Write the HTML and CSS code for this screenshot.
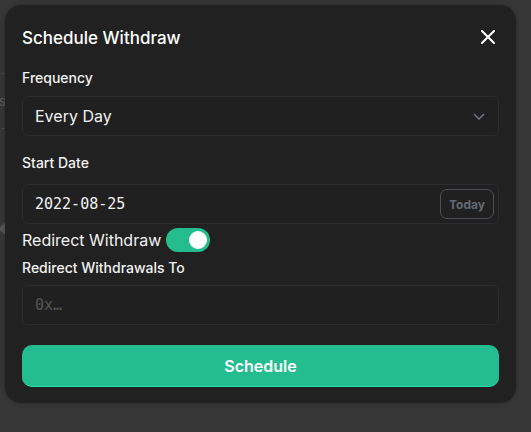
FILE: index.html
```html
<!DOCTYPE html>
<html>
<head>
<meta charset="utf-8">
<link rel="stylesheet" href="styles.css">
</head>
<body>
<div class="page">
  <div class="ghost-line"></div>
  <div class="ghost-text">Users</div>
  <div class="ghost-line"></div>
  <div class="ghost-icon">◆</div>
  <div class="ghost-text2">Fee</div>
</div>
<div class="modal">
  <div class="header">
    <h2 class="title">Schedule Withdraw</h2>
    <svg class="close" width="14" height="14" viewBox="0 0 14 14"><path d="M1 1 L13 13 M13 1 L1 13" stroke="#fff" stroke-width="2" stroke-linecap="square"/></svg>
  </div>
  <div class="label label-freq">Frequency</div>
  <div class="field select">
    <span class="value">Every Day</span>
    <svg class="chev" width="12" height="7" viewBox="0 0 12 7"><path d="M1 1 L6 6 L11 1" fill="none" stroke="#6f7480" stroke-width="1.5"/></svg>
  </div>
  <div class="label label-date">Start Date</div>
  <div class="field date">
    <span class="mono value-mono">2022-08-25</span>
    <button class="today">Today</button>
  </div>
  <div class="redirect-row">
    <span class="redirect-text">Redirect Withdraw</span>
    <span class="toggle"><span class="knob"></span></span>
  </div>
  <div class="label label-to">Redirect Withdrawals To</div>
  <div class="field addr">
    <span class="mono placeholder">0x…</span>
  </div>
  <button class="schedule">Schedule</button>
</div>
</body>
</html>
```
FILE: styles.css
```css
* { box-sizing: border-box; }
html, body { margin: 0; padding: 0; }
body {
  width: 531px;
  height: 432px;
  background: #363636;
  font-family: Inter, "Noto Sans", sans-serif;
  color: #fff;
  overflow: hidden;
  position: relative;
}
.page {
  padding-top: 73px;
  margin-left: -30px;
  color: #5a5a5a;
  font-size: 13px;
}
.ghost-line {
  width: 40px;
  border-top: 1px dashed #4a4a4a;
}
.ghost-text {
  height: 54px;
  line-height: 54px;
}
.ghost-icon {
  margin-top: 92px;
  margin-left: 28px;
  font-size: 12px;
  color: #555;
}
.ghost-text2 {
  margin-top: 34px;
  margin-left: 0;
}
.modal {
  position: absolute;
  left: 5px;
  top: 5px;
  width: 511px;
  background: #212121;
  border-radius: 16px;
  padding: 18px 17px 16px;
  box-shadow: 0 0 4px rgba(0,0,0,0.25);
}
.header {
  display: flex;
  align-items: center;
  justify-content: space-between;
  height: 28px;
}
.title {
  margin: 0;
  font-size: 17px;
  line-height: 28px;
  font-weight: 500;
  letter-spacing: 0;
  padding-top: 1px;
}
.close { margin-right: 4px; }
.label {
  font-size: 14px;
  line-height: 20px;
  font-weight: 500;
  color: #f2f2f2;
}
.label-freq { margin-top: 17px; }
.label-date { margin-top: 17px; }
.label-to { margin-top: 6px; }
.field {
  height: 40px;
  border: 1px solid #2c2c2c;
  border-radius: 6px;
  background: #202020;
  display: flex;
  align-items: center;
  padding: 0 12px 0 12px;
}
.select { margin-top: 8px; justify-content: space-between; padding-right: 13px; }
.value { font-size: 16px; color: #f2f2f2; }
.date { margin-top: 11px; justify-content: space-between; padding-right: 4px; }
.addr { margin-top: 7px; }
.mono {
  font-family: "DejaVu Sans Mono", "Liberation Mono", monospace;
  font-size: 15px;
}
.value-mono { color: #f2f2f2; }
.placeholder { color: #555; }
.today {
  width: 54px;
  height: 30px;
  border: 1px solid #4a4f58;
  border-radius: 7px;
  background: transparent;
  color: #646a74;
  font-family: Inter, sans-serif;
  font-weight: 700;
  font-size: 12px;
  padding: 0;
}
.redirect-row {
  margin-top: 4px;
  height: 24px;
  display: flex;
  align-items: center;
}
.redirect-text { font-size: 16px; color: #f2f2f2; }
.toggle {
  margin-left: 5px;
  width: 44px;
  height: 24px;
  border-radius: 12px;
  background: #25bd8e;
  display: flex;
  align-items: center;
  justify-content: flex-end;
  padding: 0 3px;
}
.knob {
  width: 18px;
  height: 18px;
  border-radius: 50%;
  background: #fff;
}
.schedule {
  display: block;
  width: 100%;
  margin-top: 20px;
  height: 42px;
  border: none;
  border-bottom: 1px solid #2ee0a8;
  border-radius: 10px;
  background: #24bd90;
  color: #fff;
  font-family: Inter, sans-serif;
  font-size: 16px;
  font-weight: 600;
}
```
